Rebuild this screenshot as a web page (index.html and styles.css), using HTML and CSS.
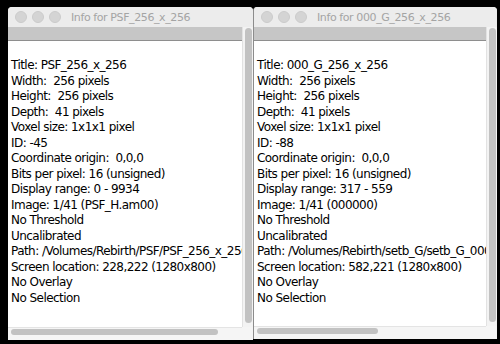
FILE: index.html
```html
<!DOCTYPE html>
<html>
<head>
<meta charset="utf-8">
<link rel="stylesheet" href="styles.css">
</head>
<body>
<div class="desk">
  <div class="win win-left">
    <div class="titlebar">
      <div class="lights"><span class="light"></span><span class="light"></span><span class="light"></span></div>
      <div class="title">Info for PSF_256_x_256</div>
    </div>
    <div class="pane">
      <div class="band"></div>
      <div class="content">
        <div>Title: PSF_256_x_256</div>
        <div>Width:&nbsp; 256 pixels</div>
        <div>Height:&nbsp; 256 pixels</div>
        <div>Depth:&nbsp; 41 pixels</div>
        <div>Voxel size: 1x1x1 pixel</div>
        <div>ID: -45</div>
        <div>Coordinate origin:&nbsp; 0,0,0</div>
        <div>Bits per pixel: 16 (unsigned)</div>
        <div>Display range: 0 - 9934</div>
        <div>Image: 1/41 (PSF_H.am00)</div>
        <div>No Threshold</div>
        <div>Uncalibrated</div>
        <div>Path: /Volumes/Rebirth/PSF/PSF_256_x_256/</div>
        <div>Screen location: 228,222 (1280x800)</div>
        <div>No Overlay</div>
        <div>No Selection</div>
      </div>
      <div class="vscroll"><div class="vthumb"></div></div>
      <div class="hscroll"><div class="hthumb hthumb-left"></div></div>
      <div class="corner"></div>
    </div>
  </div>
  <div class="win win-right">
    <div class="titlebar">
      <div class="lights"><span class="light"></span><span class="light"></span><span class="light"></span></div>
      <div class="title">Info for 000_G_256_x_256</div>
    </div>
    <div class="pane">
      <div class="band"></div>
      <div class="content">
        <div>Title: 000_G_256_x_256</div>
        <div>Width:&nbsp; 256 pixels</div>
        <div>Height:&nbsp; 256 pixels</div>
        <div>Depth:&nbsp; 41 pixels</div>
        <div>Voxel size: 1x1x1 pixel</div>
        <div>ID: -88</div>
        <div>Coordinate origin:&nbsp; 0,0,0</div>
        <div>Bits per pixel: 16 (unsigned)</div>
        <div>Display range: 317 - 559</div>
        <div>Image: 1/41 (000000)</div>
        <div>No Threshold</div>
        <div>Uncalibrated</div>
        <div>Path: /Volumes/Rebirth/setb_G/setb_G_000/</div>
        <div>Screen location: 582,221 (1280x800)</div>
        <div>No Overlay</div>
        <div>No Selection</div>
      </div>
      <div class="vscroll"><div class="vthumb"></div></div>
      <div class="hscroll"><div class="hthumb hthumb-right"></div></div>
      <div class="corner"></div>
    </div>
  </div>
</div>
</body>
</html>
```

FILE: styles.css
```css
html, body {
  margin: 0;
  padding: 0;
  background: #000;
  width: 500px;
  height: 344px;
  overflow: hidden;
}

.desk {
  display: flex;
  padding: 7px 0 0 8px;
}

.win {
  height: 333px;
  display: flex;
  flex-direction: column;
  background: #ececec;
  border-radius: 4px 4px 0 0;
  overflow: hidden;
  font-family: "DejaVu Sans", sans-serif;
}

.win-left {
  width: 245px;
}

.win-right {
  width: 244px;
  height: 332px;
  border-left: 1px solid #8c8c8c;
  box-sizing: border-box;
}

.titlebar {
  height: 20px;
  flex: none;
  display: flex;
  align-items: center;
  background: #ececec;
}

.lights {
  display: flex;
  gap: 5px;
  padding-left: 7px;
}

.light {
  width: 12px;
  height: 12px;
  border-radius: 50%;
  background: #d4d4d4;
  box-sizing: border-box;
  border: 1px solid #cbcbcb;
}

.title {
  margin-left: 10px;
  font-family: "DejaVu Sans", sans-serif;
  font-size: 11px;
  letter-spacing: -0.4px;
  color: #a4a4a4;
  white-space: nowrap;
}

.pane {
  flex: 1;
  display: grid;
  grid-template-columns: 1fr 11px;
  grid-template-rows: 14px 1fr 13px;
  min-height: 0;
}

.band {
  grid-column: 1;
  grid-row: 1;
  background: #c6c6c6;
  border-bottom: 1px solid #8e8e8e;
}

.content {
  grid-column: 1;
  grid-row: 2;
  background: #fff;
  padding: 17px 0 0 3px;
  font-size: 12px;
  letter-spacing: -0.55px;
  line-height: 15.5px;
  color: #000;
  white-space: nowrap;
  overflow: hidden;
  min-width: 0;
}

.vscroll {
  grid-column: 2;
  grid-row: 1 / 3;
  background: #f3f3f3;
  border-left: 1px solid #e2e2e2;
  padding: 1px 1px 4px 2px;
  display: flex;
}

.vthumb {
  flex: 1;
  background: #c2c2c2;
  border-radius: 4px;
}

.hscroll {
  grid-column: 1;
  grid-row: 3;
  background: #f5f5f5;
  border-top: 1px solid #e4e4e4;
  padding: 1px 0 5px 3px;
  display: flex;
}

.hthumb {
  background: #c2c2c2;
  border-radius: 4px;
}

.hthumb-left {
  width: 207px;
}

.hthumb-right {
  width: 121px;
}

.corner {
  grid-column: 2;
  grid-row: 3;
  background: #f5f5f5;
}
```
